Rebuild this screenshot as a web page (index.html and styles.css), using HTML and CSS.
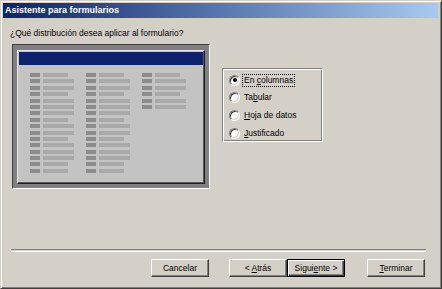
FILE: index.html
```html
<!DOCTYPE html>
<html lang="es">
<head>
  <meta charset="UTF-8">
  <title>Asistente para formularios</title>
  <link rel="stylesheet" href="styles.css">
</head>
<body>

  <div class="window">
    <div class="titlebar">Asistente para formularios</div>

    <p class="question">¿Qué distribución desea aplicar al formulario?</p>

    <div class="main">
      <!-- vista previa -->
      <div class="preview">
        <div class="sheet">
          <div class="sheet-bar"></div>
          <div class="cols">
            <div class="col">
              <div class="row"><i></i><b class="s"></b></div>
              <div class="row"><i></i><b></b></div>
              <div class="row"><i></i><b></b></div>
              <div class="row"><i></i><b class="s"></b></div>
              <div class="row"><i></i><b></b></div>
              <div class="row"><i></i><b></b></div>
              <div class="row"><i></i><b></b></div>
              <div class="row"><i></i><b class="s"></b></div>
              <div class="row"><i></i><b></b></div>
              <div class="row"><i></i><b></b></div>
              <div class="row"><i></i><b class="s"></b></div>
              <div class="row"><i></i><b></b></div>
              <div class="row"><i></i><b></b></div>
              <div class="row"><i></i><b></b></div>
              <div class="row"><i></i><b class="s"></b></div>
              <div class="row"><i></i><b class="s"></b></div>
            </div>
            <div class="col">
              <div class="row"><i></i><b class="s"></b></div>
              <div class="row"><i></i><b></b></div>
              <div class="row"><i></i><b></b></div>
              <div class="row"><i></i><b class="s"></b></div>
              <div class="row"><i></i><b></b></div>
              <div class="row"><i></i><b></b></div>
              <div class="row"><i></i><b></b></div>
              <div class="row"><i></i><b class="s"></b></div>
              <div class="row"><i></i><b></b></div>
              <div class="row"><i></i><b></b></div>
              <div class="row"><i></i><b class="s"></b></div>
              <div class="row"><i></i><b></b></div>
              <div class="row"><i></i><b></b></div>
              <div class="row"><i></i><b></b></div>
              <div class="row"><i></i><b class="s"></b></div>
              <div class="row"><i></i><b class="s"></b></div>
            </div>
            <div class="col">
              <div class="row"><i></i><b class="s"></b></div>
              <div class="row"><i></i><b></b></div>
              <div class="row"><i></i><b></b></div>
              <div class="row"><i></i><b class="s"></b></div>
              <div class="row"><i></i><b></b></div>
              <div class="row"><i></i><b></b></div>
            </div>
          </div>
        </div>
      </div>

      <!-- opciones -->
      <div class="options">
        <div class="option"><span class="radio checked"></span><span class="label focus">En <u>c</u>olumnas</span></div>
        <div class="option"><span class="radio"></span><span class="label">Ta<u>b</u>ular</span></div>
        <div class="option"><span class="radio"></span><span class="label"><u>H</u>oja de datos</span></div>
        <div class="option"><span class="radio"></span><span class="label"><u>J</u>ustificado</span></div>
      </div>
    </div>

    <div class="separator"></div>

    <div class="buttons">
      <div class="btn"><span>Cancelar</span></div>
      <div class="btn back"><span>&lt; <u>A</u>trás</span></div>
      <div class="btn default"><span>Sigui<u>e</u>nte &gt;</span></div>
      <div class="btn finish"><span><u>T</u>erminar</span></div>
    </div>
  </div>

</body>
</html>
```

FILE: styles.css
```css
:root {
  --face: #d4d0c8;
  --shadow: #808080;
  --dark: #404040;
  --light: #ffffff;
}

body {
  margin: 0;
  font-family: 'Liberation Sans', Arial, sans-serif;
  font-size: 8.5px;
  color: #000;
}

.window {
  width: 442px;
  height: 289px;
  box-sizing: border-box;
  background: var(--face);
  border: 1px solid;
  border-color: var(--face) var(--dark) var(--dark) var(--face);
  box-shadow: inset 1px 1px var(--light), inset -1px -1px var(--shadow);
  padding: 2px;
  display: flex;
  flex-direction: column;
}

.titlebar {
  height: 15px;
  line-height: 15px;
  padding-left: 2px;
  margin-right: 1px;
  color: #fff;
  font-size: 9px;
  font-weight: bold;
  background: linear-gradient(to right, #0a246a, #a6caf0);
}

.question {
  margin: 10px 0 0 7px;
  height: 11px;
  line-height: 11px;
}

.main {
  display: flex;
  align-items: flex-start;
  margin: 5px 0 0 9px;
}

/* vista previa */
.preview {
  width: 198px;
  height: 145px;
  box-sizing: border-box;
  background: var(--shadow);
  border: 1px solid;
  border-color: var(--dark) var(--light) var(--light) var(--dark);
  padding: 5px 0 0 4px;
}

.sheet {
  width: 188px;
  height: 134px;
  box-sizing: border-box;
  background: #c3c3c3;
  border: 1px solid;
  border-color: #e8e8e8 #1c1c1c #1c1c1c #e8e8e8;
  box-shadow: inset -1px -1px #5a5a5a;
  padding: 1px;
}

.sheet-bar {
  height: 13px;
  background: #0c226c;
}

.cols {
  display: flex;
  gap: 12px;
  margin: 8px 0 0 11px;
}

.col {
  display: flex;
  flex-direction: column;
  gap: 2.4px;
  width: 44px;
}

.row {
  display: flex;
  gap: 3px;
  height: 4px;
}

.row i {
  width: 10px;
  background: #8c8c8c;
}

.row b {
  width: 31px;
  background: #a9a9a9;
}

.row b.s {
  width: 25px;
}

/* opciones */
.options {
  width: 101px;
  height: 74px;
  box-sizing: border-box;
  margin: 24px 0 0 12px;
  border: 1px solid;
  border-color: var(--shadow) var(--light) var(--light) var(--shadow);
  box-shadow: inset 1px 1px var(--light), inset -1px -1px var(--shadow);
  padding: 5px 0 0 6px;
  display: flex;
  flex-direction: column;
  gap: 5.7px;
}

.option {
  display: flex;
  align-items: center;
  gap: 2px;
  height: 12px;
}

.radio {
  position: relative;
  width: 11px;
  height: 11px;
  box-sizing: border-box;
  border-radius: 50%;
  background: #fff;
  border: 1px solid;
  border-color: var(--shadow) var(--light) var(--light) var(--shadow);
  box-shadow: inset 1px 1px var(--dark), inset -1px -1px var(--face);
}

.radio.checked::after {
  content: "";
  position: absolute;
  left: 2.5px;
  top: 2.5px;
  width: 4px;
  height: 4px;
  border-radius: 50%;
  background: #000;
}

.label {
  line-height: 11px;
  padding: 0 1px;
  border: 1px solid transparent;
}

.label.focus {
  border: 1px dotted #000;
}

/* pie */
.separator {
  margin: 60px 0 0 8px;
  width: 415px;
  height: 1px;
  border-top: 1px solid var(--shadow);
  border-bottom: 1px solid var(--light);
}

.buttons {
  display: flex;
  margin: 7px 0 0 148px;
}

.btn {
  width: 58px;
  height: 18px;
  box-sizing: border-box;
  display: flex;
  align-items: center;
  justify-content: center;
  background: var(--face);
  border: 1px solid;
  border-color: var(--light) var(--dark) var(--dark) var(--light);
  box-shadow: inset -1px -1px var(--shadow);
}

.btn.back {
  margin-left: 20px;
}

.btn.default {
  border-color: #000;
  box-shadow: inset 1px 1px var(--light), inset -1px -1px var(--dark), inset -2px -2px var(--shadow);
}

.btn.finish {
  margin-left: 22px;
}
```
